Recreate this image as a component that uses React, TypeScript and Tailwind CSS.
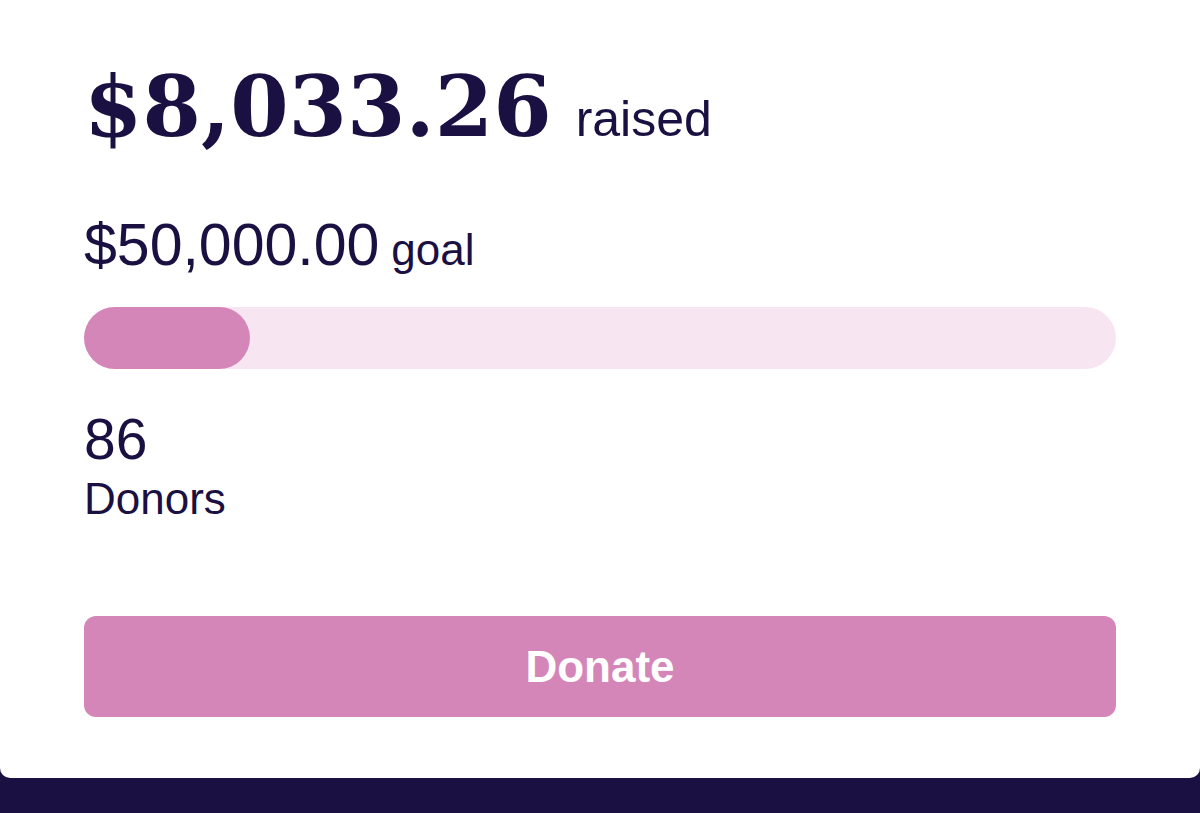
const raised = 8033.26;
const goal = 50000;
const donors = 86;

const money = (n: number) =>
  "$" + n.toLocaleString("en-US", { minimumFractionDigits: 2, maximumFractionDigits: 2 });

export default function App() {
  const pct = Math.min(100, (raised / goal) * 100);

  return (
    <div className="h-screen w-full bg-[#1b1042]">
      <div className="flex h-[778px] flex-col rounded-b-[10px] bg-white px-[84px] pt-[65px] text-[#1b1042] font-['Liberation_Sans',Arial,sans-serif]">
        <div className="flex items-baseline">
          <span className="font-['DejaVu_Serif',Georgia,serif] text-[84px] font-bold leading-[84px]">
            {money(raised)}
          </span>
          <span className="ml-[24px] text-[50px] leading-[50px]">raised</span>
        </div>

        <div className="mt-[67px] flex items-baseline">
          <span className="text-[59px] leading-[58px]">{money(goal)}</span>
          <span className="ml-[12px] text-[44px] leading-[44px]">goal</span>
        </div>

        <div className="mt-[33px] h-[62px] w-full rounded-full bg-[#f8e5f2]">
          <div
            className="h-full rounded-full bg-[#d486b8]"
            style={{ width: `${pct}%`, minWidth: 62 }}
          />
        </div>

        <div className="mt-[42px] text-[57px] leading-[56px]">{donors}</div>
        <div className="mt-[10px] text-[44px] leading-[44px]">Donors</div>

        <button className="mt-[95px] h-[101px] w-full rounded-[12px] bg-[#d486b8] text-[44px] font-bold text-white">
          Donate
        </button>
      </div>
    </div>
  );
}
